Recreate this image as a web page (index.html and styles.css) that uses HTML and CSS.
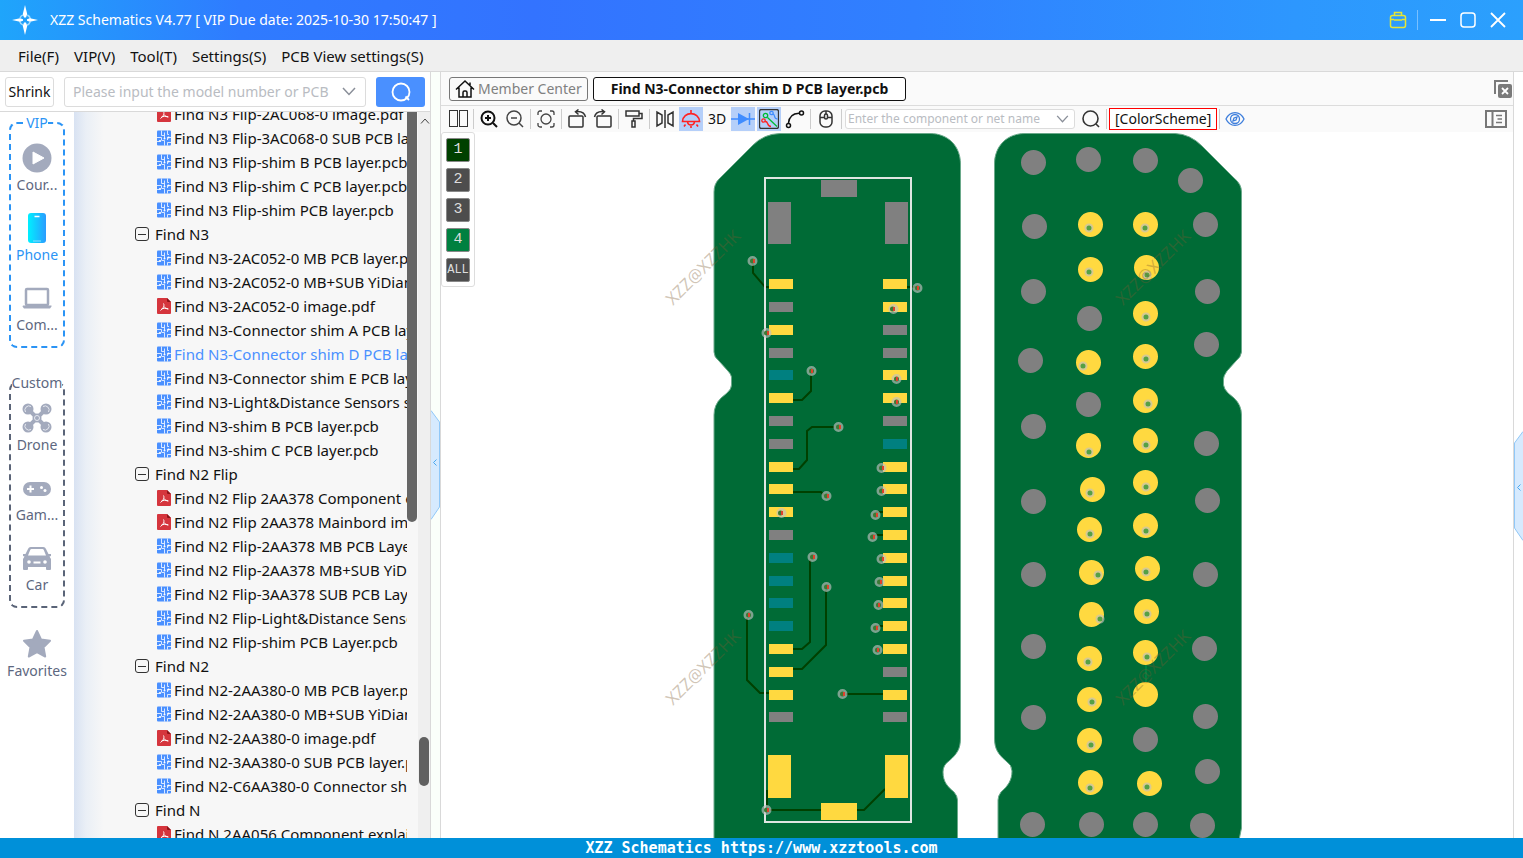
FILE: index.html
```html
<!DOCTYPE html>
<html lang="en">
<head>
<meta charset="utf-8">
<title>XZZ Schematics</title>
<link rel="stylesheet" href="styles.css">
</head>
<body>
<svg class="defs" aria-hidden="true">
  <symbol id="i-pcb" viewBox="0 0 14 16">
    <rect y=".5" width="14" height="15" rx="1" fill="#4a90ff"/>
    <path d="M4.500 .5V5.500H7M7.500 2.500V8.500M10.500 .5V4.500H12M14 7.500H10.500V10M0 7.500H4.500V10M0 11.500H2.500M4.500 10.500H7.500V15.500M10.500 15.500V12.500H14" fill="none" stroke="#fff" stroke-width=".8"/>
    <g fill="#fff"><circle cx="7.500" cy="8.500" r="1"/><circle cx="11.500" cy="7.500" r="1.100"/><circle cx="3" cy="11" r="1.100"/></g>
  </symbol>
  <symbol id="i-pdf" viewBox="0 0 14 16">
    <path d="M1 0H10L14 4V15a1 1 0 0 1-1 1H1a1 1 0 0 1-1-1V1a1 1 0 0 1 1-1z" fill="#d5353d"/>
    <path d="M10 0L14 4H11a1 1 0 0 1-1-1z" fill="#8c1318"/>
    <path d="M6.500 5.500C7.800 8 6 10.500 3.500 12.500M7 8.500C8 10.200 9.500 11 11.500 11M4 11.500C6 10 8.500 10 11 10.800" fill="none" stroke="#fff"/>
  </symbol>
</svg>

<div class="app">
  <header class="titlebar">
    <svg class="logo" width="26" height="30" viewBox="0 0 26 30">
      <circle cx="13" cy="15" r="5.500" fill="none" stroke="#9fdcff" stroke-width="1.500" stroke-dasharray="5 3.640" stroke-dashoffset="-1.800"/>
      <path d="M13 0L15.200 9L14 12.500H12L10.800 9zM13 30L15.200 21L14 17.500H12L10.800 21zM0 15L8 13.300L11 14.200V15.800L8 16.700zM26 15L18 13.300L15 14.200V15.800L18 16.700z" fill="#fff"/>
    </svg>
    <h1 class="title">XZZ Schematics V4.77 [ VIP Due date: 2025-10-30 17:50:47 ]</h1>
    <div class="window-tools">
      <button class="plain" aria-label="Toolbox"><svg width="18" height="18" viewBox="0 0 18 18" fill="none" stroke="#e6e635" stroke-width="1.500"><rect x="1.500" y="4.500" width="15" height="12" rx="2"/><path d="M5.500 4V1.500H12.500V4M2 8.500H5M13 8.500H16M5 9H13"/></svg></button>
      <span class="divider"></span>
      <button class="plain" aria-label="Minimize"><svg width="18" height="18" viewBox="0 0 18 18"><path d="M1 9H17" stroke="#fff" stroke-width="2"/></svg></button>
      <button class="plain" aria-label="Maximize"><svg width="18" height="18" viewBox="0 0 18 18"><rect x="2" y="2" width="14" height="14" rx="3" fill="none" stroke="#fff" stroke-width="1.500"/></svg></button>
      <button class="plain" aria-label="Close"><svg width="18" height="18" viewBox="0 0 18 18"><path d="M2 2L16 16M16 2L2 16" stroke="#fff" stroke-width="1.800"/></svg></button>
    </div>
  </header>

  <nav class="menubar">
    <button class="plain">File(F)</button>
    <button class="plain">VIP(V)</button>
    <button class="plain">Tool(T)</button>
    <button class="plain">Settings(S)</button>
    <button class="plain">PCB View settings(S)</button>
  </nav>

  <div class="body">
    <aside class="sidebar">
      <form class="search">
        <button type="button" class="shrink">Shrink</button>
        <div class="combo">
          <input type="text" aria-label="Model number" placeholder="Please input the model number or PCB">
          <svg width="14" height="9" viewBox="0 0 14 9"><path d="M1 1L7 7.500L13 1" fill="none" stroke="#8a8f99" stroke-width="1.500"/></svg>
        </div>
        <button type="button" class="go" aria-label="Search"><svg width="22" height="22" viewBox="0 0 22 22" fill="none" stroke="#fff" stroke-width="1.800"><circle cx="11" cy="11" r="8.500"/><path d="M15.500 15.500L19 19"/></svg></button>
      </form>
      <div class="browser">
        <nav class="rail">
          <fieldset class="group vip">
            <legend>VIP</legend>
            <a href="#course"><svg width="30" height="30" viewBox="0 0 30 30"><circle cx="15" cy="15" r="14.500" fill="#a3aabd"/><path d="M11 9L22 15L11 21z" fill="#fff" stroke="#fff" stroke-linejoin="round"/></svg>Cour...</a>
            <a href="#phone" class="active"><svg width="30" height="30" viewBox="0 0 30 30"><defs><linearGradient id="ph"><stop stop-color="#00f0ff"/><stop offset="1" stop-color="#2a9cff"/></linearGradient></defs><rect x="6" y="0" width="18" height="30" rx="3" fill="url(#ph)"/><path d="M12.500 3.500H17.500" stroke="#fff" stroke-width="1.500"/><path d="M11 28H19" stroke="#8fe0ff"/></svg>Phone</a>
            <a href="#computer"><svg width="30" height="30" viewBox="0 0 30 30"><rect x="4" y="6" width="22" height="16" rx="1" fill="none" stroke="#a3aabd" stroke-width="2.500"/><path d="M1 22.500H29.500V23.500L28 25.500H2L.5 23.500z" fill="#a3aabd"/></svg>Com...</a>
          </fieldset>
          <fieldset class="group custom">
            <legend>Custom</legend>
            <a href="#drone"><svg width="30" height="30" viewBox="0 0 30 30"><path d="M6 6L15 15L24 6M6 24L15 15L24 24" fill="none" stroke="#a3aabd" stroke-width="4"/><g fill="#a3aabd"><circle cx="15" cy="15" r="4.500"/><circle cx="6" cy="6" r="5.500"/><circle cx="24" cy="6" r="5.500"/><circle cx="6" cy="24" r="5.500"/><circle cx="24" cy="24" r="5.500"/></g><g fill="none" stroke="#e6e9f0"><circle cx="15" cy="15" r="2.500"/><path d="M3.500 9A4 4 0 0 1 9 3.500M26.500 9A4 4 0 0 0 21 3.500M3.500 21A4 4 0 0 0 9 26.500M26.500 21A4 4 0 0 1 21 26.500"/></g></svg>Drone</a>
            <a href="#game"><svg width="30" height="30" viewBox="0 0 30 30"><rect x="1" y="9" width="28" height="14" rx="7" fill="#a3aabd"/><path d="M8.500 12.500V19.500M5 16H12" stroke="#fff" stroke-width="2"/><circle cx="19.500" cy="14.500" r="1.500" fill="#fff"/><circle cx="23" cy="17.500" r="1.500" fill="#fff"/></svg>Gam...</a>
            <a href="#car"><svg width="30" height="30" viewBox="0 0 30 30"><path d="M9 4H21a3 3 0 0 1 3 2L26.500 11H29V13L27.500 13.500L29 16V26a1 1 0 0 1-1 1H25a1 1 0 0 1-1-1V24H6V26a1 1 0 0 1-1 1H2a1 1 0 0 1-1-1V16L2.500 13.500L1 13V11H3.500L6 6A3 3 0 0 1 9 4z" fill="#a3aabd"/><path d="M9.500 6H20.500a1.500 1.500 0 0 1 1.300 1L24 12.500H6L8.200 7A1.500 1.500 0 0 1 9.500 6z" fill="#fff"/><circle cx="7" cy="19" r="1.800" fill="#fff"/><circle cx="23" cy="19" r="1.800" fill="#fff"/><path d="M11.500 19.500H18.500" stroke="#fff" stroke-width="2"/></svg>Car</a>
          </fieldset>
          <a href="#favorites"><svg width="30" height="30" viewBox="0 0 30 30"><path d="M15 2L19 10.500L28 11.800L21.500 18.300L23.200 27.500L15 23.200L6.800 27.500L8.500 18.300L2 11.800L11 10.500z" fill="#a3aabd" stroke="#a3aabd" stroke-width="2" stroke-linejoin="round"/></svg>Favorites</a>
        </nav>
        <div class="tree">
          <ul class="rows">
            <li><a href="#f"><svg><use href="#i-pdf"/></svg>Find N3 Flip-2AC068-0 image.pdf</a></li>
            <li><a href="#f"><svg><use href="#i-pcb"/></svg>Find N3 Flip-3AC068-0 SUB PCB layer.pcb</a></li>
            <li><a href="#f"><svg><use href="#i-pcb"/></svg>Find N3 Flip-shim B PCB layer.pcb</a></li>
            <li><a href="#f"><svg><use href="#i-pcb"/></svg>Find N3 Flip-shim C PCB layer.pcb</a></li>
            <li><a href="#f"><svg><use href="#i-pcb"/></svg>Find N3 Flip-shim PCB layer.pcb</a></li>
            <li class="folder"><button class="plain"><span class="toggle"></span>Find N3</button></li>
            <li><a href="#f"><svg><use href="#i-pcb"/></svg>Find N3-2AC052-0 MB PCB layer.pcb</a></li>
            <li><a href="#f"><svg><use href="#i-pcb"/></svg>Find N3-2AC052-0 MB+SUB YiDian.pcb</a></li>
            <li><a href="#f"><svg><use href="#i-pdf"/></svg>Find N3-2AC052-0 image.pdf</a></li>
            <li><a href="#f"><svg><use href="#i-pcb"/></svg>Find N3-Connector shim A PCB layer.pcb</a></li>
            <li class="selected"><a href="#f"><svg><use href="#i-pcb"/></svg>Find N3-Connector shim D PCB layer.pcb</a></li>
            <li><a href="#f"><svg><use href="#i-pcb"/></svg>Find N3-Connector shim E PCB layer.pcb</a></li>
            <li><a href="#f"><svg><use href="#i-pcb"/></svg>Find N3-Light&amp;Distance Sensors shim.pcb</a></li>
            <li><a href="#f"><svg><use href="#i-pcb"/></svg>Find N3-shim B PCB layer.pcb</a></li>
            <li><a href="#f"><svg><use href="#i-pcb"/></svg>Find N3-shim C PCB layer.pcb</a></li>
            <li class="folder"><button class="plain"><span class="toggle"></span>Find N2 Flip</button></li>
            <li><a href="#f"><svg><use href="#i-pdf"/></svg>Find N2 Flip 2AA378 Component explain.pdf</a></li>
            <li><a href="#f"><svg><use href="#i-pdf"/></svg>Find N2 Flip 2AA378 Mainbord image.pdf</a></li>
            <li><a href="#f"><svg><use href="#i-pcb"/></svg>Find N2 Flip-2AA378 MB PCB Layer.pcb</a></li>
            <li><a href="#f"><svg><use href="#i-pcb"/></svg>Find N2 Flip-2AA378 MB+SUB YiDian.pcb</a></li>
            <li><a href="#f"><svg><use href="#i-pcb"/></svg>Find N2 Flip-3AA378 SUB PCB Layer.pcb</a></li>
            <li><a href="#f"><svg><use href="#i-pcb"/></svg>Find N2 Flip-Light&amp;Distance Sensor.pcb</a></li>
            <li><a href="#f"><svg><use href="#i-pcb"/></svg>Find N2 Flip-shim PCB Layer.pcb</a></li>
            <li class="folder"><button class="plain"><span class="toggle"></span>Find N2</button></li>
            <li><a href="#f"><svg><use href="#i-pcb"/></svg>Find N2-2AA380-0 MB PCB layer.pcb</a></li>
            <li><a href="#f"><svg><use href="#i-pcb"/></svg>Find N2-2AA380-0 MB+SUB YiDian.pcb</a></li>
            <li><a href="#f"><svg><use href="#i-pdf"/></svg>Find N2-2AA380-0 image.pdf</a></li>
            <li><a href="#f"><svg><use href="#i-pcb"/></svg>Find N2-3AA380-0 SUB PCB layer.pcb</a></li>
            <li><a href="#f"><svg><use href="#i-pcb"/></svg>Find N2-C6AA380-0 Connector shim.pcb</a></li>
            <li class="folder"><button class="plain"><span class="toggle"></span>Find N</button></li>
            <li><a href="#f"><svg><use href="#i-pdf"/></svg>Find N 2AA056 Component explain.pdf</a></li>
          </ul>
          <div class="inner-track"><div class="thumb"></div></div>
          <div class="outer-track">
            <svg width="10" height="6" viewBox="0 0 10 6"><path d="M1 5.500L5 1L9 5.500" fill="none" stroke="#444"/></svg>
            <div class="thumb"></div>
          </div>
        </div>
      </div>
    </aside>

    <div class="splitter">
      <button class="plain" aria-label="Collapse list"><svg width="9" height="110" viewBox="0 0 9 110"><path d="M0 .5L8.500 12V97L0 109.500" fill="#d6eafe" stroke="#90c8f8"/><path d="M5.500 49.500L2.500 52.500L5.500 55.500" fill="none" stroke="#4aa8f0"/></svg></button>
    </div>

    <main class="viewer">
      <div class="tabs">
        <button class="tab home"><svg width="20" height="20" viewBox="0 0 20 20" fill="none" stroke="#111" stroke-width="1.500"><path d="M1 10.500L10 2L19 10.500M4 8.500V18H16V8.500M8 18V13.500a1.500 1.500 0 0 1 1.500-1.500h1a1.500 1.500 0 0 1 1.500 1.500V18M15 3.500V6"/></svg>Member Center</button>
        <button class="tab current">Find N3-Connector shim D PCB layer.pcb</button>
        <button class="plain close-all" aria-label="Close all"><svg width="18" height="18" viewBox="0 0 18 18"><path d="M1 14V1H14" fill="none" stroke="#7a7a7a" stroke-width="2"/><rect x="4" y="4" width="14" height="14" rx="2" fill="#7a7a7a"/><path d="M8 8L14 14M14 8L8 14" stroke="#fff" stroke-width="1.800"/></svg></button>
      </div>
      <div class="toolbar">
        <button class="tool" aria-label="Split view"><svg width="20" height="20" viewBox="0 0 20 20" fill="none" stroke="#333"><rect x="1.500" y="1.500" width="8" height="16"/><rect x="11.500" y="1.500" width="8" height="16"/></svg></button>
        <span class="sep"></span>
        <button class="tool" aria-label="Zoom in"><svg width="20" height="20" viewBox="0 0 20 20" fill="none" stroke="#111" stroke-width="2"><circle cx="9" cy="9" r="6.500"/><path d="M14 14L18 18M6 9H12M9 6V12"/></svg></button>
        <button class="tool" aria-label="Zoom out"><svg width="20" height="20" viewBox="0 0 20 20" fill="none" stroke="#444" stroke-width="1.500"><circle cx="9" cy="9" r="7"/><path d="M14 14L18 18M6 9H12"/></svg></button>
        <span class="sep"></span>
        <button class="tool" aria-label="Fit"><svg width="20" height="20" viewBox="0 0 20 20" fill="none" stroke="#444" stroke-width="1.300"><path d="M2 6V4a2 2 0 0 1 2-2H6M14 2H16a2 2 0 0 1 2 2V6M18 14V16a2 2 0 0 1-2 2H14M6 18H4a2 2 0 0 1-2-2V14"/><circle cx="10" cy="10" r="5"/></svg></button>
        <span class="sep"></span>
        <button class="tool" aria-label="Rotate left"><svg width="20" height="20" viewBox="0 0 20 20" fill="none" stroke="#333" stroke-width="1.500"><rect x="2" y="7" width="14" height="11" rx="1"/><path d="M9 2.500C14 2 17.500 3 18.500 8M11.500 .5L8.500 2.800L11.500 5.500"/></svg></button>
        <button class="tool" aria-label="Rotate right"><svg width="20" height="20" viewBox="0 0 20 20" fill="none" stroke="#333" stroke-width="1.500"><rect x="4" y="7" width="14" height="11" rx="1"/><path d="M11 2.500C6 2 2.500 3 1.500 8M8.500 .5L11.500 2.800L8.500 5.500"/></svg></button>
        <span class="sep"></span>
        <button class="tool" aria-label="Paint"><svg width="20" height="20" viewBox="0 0 20 20" fill="none" stroke="#333" stroke-width="1.500"><rect x="2" y="2" width="13" height="5"/><path d="M15 4.500H18V9.500H9.500V12"/><rect x="8" y="12" width="3" height="6"/></svg></button>
        <span class="sep"></span>
        <button class="tool" aria-label="Mirror"><svg width="20" height="20" viewBox="0 0 20 20" fill="none" stroke="#333" stroke-width="1.500"><path d="M2 3V17L7 14V6zM18 3V17L13 14V6zM10 1V19"/></svg></button>
        <button class="tool on" aria-label="Light"><svg width="20" height="20" viewBox="0 0 20 20" fill="none" stroke="#f22" stroke-width="1.600"><path d="M10 1V4.500M1.500 12.500C2 2 18 2 18.500 12.500zM6.500 13C7 17 13 17 13.500 13M10 17V19M4.500 15.500L3 17.500M15.500 15.500L17 17.500"/></svg></button>
        <button class="tool">3D</button>
        <button class="tool on" aria-label="Diode"><svg width="24" height="20" viewBox="0 0 24 20"><path d="M0 10H24M18.500 4V16" stroke="#3f8cff" stroke-width="1.500"/><path d="M7 4V16L18 10z" fill="#3f8cff"/></svg></button>
        <button class="tool on" aria-label="Nets"><svg width="20" height="20" viewBox="0 0 20 20" fill="none" stroke-width="1.300"><rect x=".5" y=".5" width="19" height="19" rx="2" stroke="#333"/><path d="M8.500 8.500L18 17.500" stroke="#0b3"/><circle cx="6.500" cy="6.500" r="2.200" stroke="#0b3"/><circle cx="12.500" cy="4" r="1.700" stroke="#3f8cff"/><path d="M14 5C17 6 14 10 18.500 10" stroke="#3f8cff"/><circle cx="4.500" cy="11.500" r="1.700" stroke="#f22"/><path d="M6 12.500C10 12 7 17 12 17.500" stroke="#f22"/></svg></button>
        <button class="tool" aria-label="Curve"><svg width="20" height="20" viewBox="0 0 20 20" fill="none" stroke="#111" stroke-width="1.500"><circle cx="3.500" cy="16.500" r="2"/><circle cx="16.500" cy="4" r="2"/><path d="M3.500 14C4 8 8 4.500 14 4.200"/></svg></button>
        <span class="sep"></span>
        <button class="tool" aria-label="Mouse"><svg width="20" height="20" viewBox="0 0 20 20" fill="none" stroke="#333" stroke-width="1.500"><rect x="4" y="2" width="12" height="16" rx="5"/><path d="M4 8.500H16M10 2V5"/><rect x="8.500" y="5" width="3" height="5" rx="1.500" fill="#fafafa"/></svg></button>
        <span class="sep"></span>
        <div class="combo net">
          <input type="text" aria-label="Component or net name" placeholder="Enter the component or net name">
          <svg width="13" height="8" viewBox="0 0 14 9"><path d="M1 1L7 7.500L13 1" fill="none" stroke="#8a8f99" stroke-width="1.500"/></svg>
        </div>
        <button class="tool" aria-label="Find"><svg width="20" height="20" viewBox="0 0 20 20" fill="none" stroke="#333" stroke-width="1.600"><circle cx="9.500" cy="9.500" r="7.500"/><path d="M15 15L18 18"/></svg></button>
        <span class="sep"></span>
        <button class="scheme">[ColorScheme]</button>
        <span class="sep"></span>
        <button class="tool" aria-label="Show"><svg width="20" height="20" viewBox="0 0 20 20" fill="none" stroke="#3f7fdc" stroke-width="1.300"><path d="M1 10C5 1.500 15 1.500 19 10C15 18.500 5 18.500 1 10z"/><circle cx="10" cy="10" r="4.500"/><path d="M8 12L9 9L12 8L11 11z"/></svg></button>
        <button class="tool panel" aria-label="Side panel"><svg width="22" height="20" viewBox="0 0 22 20" fill="none" stroke="#777" stroke-width="2"><rect x="1" y="2" width="20" height="16"/><path d="M7.500 2V18"/><path d="M11 6.500H17M12.500 10H17M11 13.500H17" stroke-width="1.500"/></svg></button>
      </div>
      <div class="canvas">
        <svg class="board" viewBox="441 132 1072 706" preserveAspectRatio="xMidYMin slice">
          <g fill="#006b36" stroke="#6aa98a">
            <path d="M780 133.500H930C948 133.500 960.500 146 960.500 164V738C960.500 749 957 754 949 761Q943 765 943 772C943 782 948 787 954 792Q957.500 796 957.500 800V845H714V415Q714 405 721 398L727 393Q731.500 389 731.500 385V377Q731 374 728 371L719 361Q714 357 714 352V192Q714 184 719 179L753 145Q764 134 780 133.500z"/>
            <path d="M1025 133.500H1175Q1190 134 1202 146L1234 178Q1241.500 184 1241.500 192V352Q1241 357 1236 361L1227 371Q1223.500 376 1223.500 379V385Q1224 389 1228 393L1234 398Q1241.500 405 1241.500 415V828L1238 845H998V800Q998 796 1001 792C1008 786 1012 780 1012 771Q1012 765 1006 761C998 754 994.500 749 994.500 738V164C994.500 146 1007 133.500 1025 133.500z"/>
          </g>
          <g fill="none" stroke="#004000" stroke-width="2">
            <path d="M753 264V273L765 287H769M907 287H917M793 400H802L811 391V375M793 469H799L807 460V431L812 427H834M793 492H821L825 496M810 560V642L802 649H793M826 590V645L802 669H793M747 618V680L760 693H769M846 694H883M770 810H821M857 810H864L885 789M767 806V791H769M876 512H884M872 535H884M876 626H884"/>
          </g>
          <path d="M1146 664V682" stroke="#008040" stroke-width="2"/>
          <path fill="#808080" d="M821 180h36v17h-36zM768 202h23v42h-23zM885 202h23v42h-23zM769 302h24v10h-24zM769 348h24v10h-24zM769 416h24v10h-24zM769 439h24v10h-24zM769 530h24v10h-24zM769 712h24v10h-24zM883 325h24v10h-24zM883 348h24v10h-24zM883 416h24v10h-24zM883 667h24v10h-24zM883 712h24v10h-24z"/>
          <path fill="#008080" d="M769 370h24v10h-24zM769 553h24v10h-24zM769 576h24v10h-24zM769 598h24v10h-24zM769 621h24v10h-24zM883 439h24v10h-24z"/>
          <path fill="#ffd940" d="M768 755h23v43h-23zM885 755h23v43h-23zM821 803h36v17h-36zM769 279h24v10h-24zM769 325h24v10h-24zM769 393h24v10h-24zM769 462h24v10h-24zM769 484h24v10h-24zM769 507h24v10h-24zM769 644h24v10h-24zM769 667h24v10h-24zM769 690h24v10h-24zM883 279h24v10h-24zM883 302h24v10h-24zM883 370h24v10h-24zM883 393h24v10h-24zM883 462h24v10h-24zM883 484h24v10h-24zM883 507h24v10h-24zM883 530h24v10h-24zM883 553h24v10h-24zM883 576h24v10h-24zM883 598h24v10h-24zM883 621h24v10h-24zM883 644h24v10h-24zM883 690h24v10h-24z"/>
          <rect x="765" y="178" width="146" height="644" fill="none" stroke="#dfe6e2" stroke-width="2"/>
          <g fill="none" stroke-linecap="round">
            <g transform="translate(.5 .5)" stroke-width="25">
              <path stroke="#808080" d="M1033 162h0M1088 159h0M1145 160h0M1190 180h0M1034 226h0M1205 224h0M1033 291h0M1207 291h0M1089 318h0M1030 360h0M1206 344h0M1088 404h0M1033 426h0M1206 443h0M1033 501h0M1207 500h0M1033 574h0M1205 574h0M1033 646h0M1204 648h0M1033 717h0M1205 716h0M1145 739h0M1207 771h0M1032 824h0M1091 824h0M1145 824h0M1202 825h0"/>
              <path stroke="#ffd940" d="M1090 224h0M1145 224h0M1090 269h0M1146 267h0M1145 313h0M1088 362h0M1145 356h0M1145 400h0M1088 445h0M1145 440h0M1092 489h0M1145 482h0M1089 529h0M1145 525h0M1091 572h0M1147 568h0M1091 614h0M1146 611h0M1089 658h0M1145 652h0M1089 699h0M1145 694h0M1089 740h0M1090 782h0M1149 783h0"/>
            </g>
            <path stroke="#c0c0c0" stroke-opacity=".65" stroke-width="9" d="M1089 228h0M1145 228h0M1089 272h0M1147 275h0M1146 317h0M1083 366h0M1146 359h0M1148 404h0M1089 452h0M1146 445h0M1090 493h0M1146 487h0M1090 534h0M1146 531h0M1098 575h0M1146 572h0M1100 619h0M1147 614h0M1088 662h0M1147 657h0M1092 702h0M1091 745h0M1090 788h0M1147 787h0"/>
            <path stroke="#55a045" stroke-width="5" d="M1089 228h0M1145 228h0M1089 272h0M1147 275h0M1146 317h0M1083 366h0M1146 359h0M1148 404h0M1089 452h0M1146 445h0M1090 493h0M1146 487h0M1090 534h0M1146 531h0M1098 575h0M1146 572h0M1100 619h0M1147 614h0M1088 662h0M1147 657h0M1092 702h0M1091 745h0M1090 788h0M1147 787h0"/>
            <g transform="translate(.5 0)">
              <path stroke="#c0c0c0" stroke-opacity=".65" stroke-width="10" d="M752 261h0M917 288h0M893 309h0M766 333h0M811 371h0M896 379h0M896 402h0M838 427h0M881 468h0M881 491h0M826 496h0M875 515h0M781 513h0M872 537h0M881 559h0M812 557h0M879 582h0M826 587h0M878 605h0M748 615h0M875 628h0M877 650h0M842 694h0M766 810h0"/>
              <path stroke="#3c7a35" stroke-width="5" d="M752 261h0M917 288h0M892 309h0M766 333h0M811 371h0M896 379h0M896 402h0M838 427h0M881 468h0M881 491h0M826 496h0M875 515h0M780 513h0M872 537h0M881 559h0M812 557h0M879 582h0M826 587h0M878 605h0M748 615h0M875 628h0M877 650h0M842 694h0M766 810h0"/>
              <path stroke="#e0402c" stroke-width="2" stroke-linecap="butt" d="M753.500 259v4M917.500 286v4M893.500 307v4M767.500 331v4M811.500 369v4M896.500 377v4M896.500 400v4M839.500 425v4M882.500 466v4M882.500 489v4M827.500 494v4M876.500 513v4M781.500 511v4M873.500 535v4M882.500 557v4M813.500 555v4M880.500 580v4M827.500 585v4M878.500 603v4M748.500 613v4M876.500 626v4M877.500 648v4M843.500 692v4M767.500 808v4"/>
            </g>
          </g>
          <g class="watermark">
            <text transform="translate(673 306) rotate(-45)">XZZ@XZZHK</text>
            <text transform="translate(673 706) rotate(-45)">XZZ@XZZHK</text>
            <text transform="translate(1123 306) rotate(-45)">XZZ@XZZHK</text>
            <text transform="translate(1123 706) rotate(-45)">XZZ@XZZHK</text>
          </g>
        </svg>
        <div class="layers">
          <button class="l1">1</button>
          <button>2</button>
          <button>3</button>
          <button class="l4">4</button>
          <button class="all">ALL</button>
        </div>
      </div>
    </main>

    <div class="splitter right">
      <button class="plain" aria-label="Open panel"><svg width="9" height="110" viewBox="0 0 9 110"><path d="M9 .5L.5 12V97L9 109.500" fill="#d6eafe" stroke="#90c8f8"/><path d="M6.500 53.500L3.500 56.500L6.500 59.500" fill="none" stroke="#4aa8f0"/></svg></button>
    </div>
  </div>

  <footer class="status">XZZ Schematics https://www.xzztools.com</footer>
</div>
</body>
</html>
```
FILE: styles.css
```css
* { box-sizing: border-box; }
body {
  margin: 0;
  font: 15px/24px "Noto Sans", "Open Sans", sans-serif;
  color: #111;
  background: #fff;
}
button, input { font: inherit; color: inherit; padding: 0; margin: 0; }
button { cursor: pointer; }
a { color: inherit; text-decoration: none; }
svg { display: block; flex: none; }
.defs { position: absolute; width: 0; height: 0; }
.plain { border: 0; background: none; }
.app { display: flex; flex-direction: column; height: 100vh; overflow: hidden; }

.titlebar {
  display: flex;
  align-items: center;
  flex: 0 0 40px;
  padding: 0 16px 0 12px;
  color: #fff;
  background: linear-gradient(90deg, #1fa5fb 0, #2f7bff 240px, #3373ff 35%, #3080ff 60%, #2d97fe 85%, #2ba0fd 100%);
}
.title { margin: 0 0 0 12px; font-size: 14px; font-weight: 400; white-space: nowrap; }
.window-tools { display: flex; align-items: center; gap: 12px; margin-left: auto; }
.divider { width: 1px; height: 20px; margin: 0 -1px 0 -2px; background: #79c0ff; }

.menubar {
  display: flex;
  align-items: center;
  gap: 15px;
  flex: 0 0 32px;
  padding: 0 18px;
  background: #efefef;
  border-bottom: 1px solid #d9d9d9;
}

.body { display: flex; flex: 1; min-height: 0; }
.sidebar { display: flex; flex-direction: column; flex: 0 0 431px; min-width: 0; border-right: 1px solid #d9d9d9; }
.search {
  display: flex;
  gap: 10px;
  align-items: center;
  flex: 0 0 40px;
  padding: 0 5px;
  border-bottom: 1px solid #d9d9d9;
  font-size: 14px;
}
.shrink {
  flex: 0 0 49px;
  height: 30px;
  background: #fff;
  border: 1px solid #dcdcdc;
  border-radius: 3px;
}
.combo {
  display: flex;
  align-items: center;
  flex: 1;
  min-width: 0;
  height: 30px;
  padding: 0 9px 0 8px;
  background: #fff;
  border: 1px solid #dcdcdc;
  border-radius: 3px;
}
.combo input { flex: 1; min-width: 0; border: 0; outline: 0; background: none; }
.combo input::placeholder { color: #b9bcc2; opacity: 1; }
.go {
  display: grid;
  place-items: center;
  flex: 0 0 49px;
  height: 30px;
  background: #4a90ff;
  border: 0;
  border-radius: 3px;
}

.browser { display: flex; flex: 1; min-height: 0; }
.rail {
  display: flex;
  flex-direction: column;
  align-items: center;
  flex: 0 0 74px;
  font-size: 14px;
  color: #5d6780;
  overflow: hidden;
}
.rail a { display: flex; flex-direction: column; align-items: center; height: 70px; }
.group {
  display: flex;
  flex-direction: column;
  align-items: center;
  width: 56px;
  margin: 0 0 24px;
  padding: 9px 0 0;
  border: 2px dashed #5a6478;
  border-radius: 8px;
  min-width: 0;
}
.group legend { padding: 0; margin: 0 auto; line-height: 22px; white-space: nowrap; }
.rail .group a:last-child { height: 63px; }
.custom { margin-bottom: 21px; }
.vip { border-color: #2b94f5; }
.vip legend, .rail .active { color: #2b94f5; }

.tree {
  display: flex;
  flex: 1;
  min-width: 0;
  overflow: hidden;
  background: linear-gradient(90deg, #d8e2f2 0, #eaeff6 12px, #f7f7f7 30px);
}
.rows { flex: 1; min-width: 0; margin: -10px 0 0; padding: 0 0 0 83px; list-style: none; }
.rows li { height: 24px; overflow: hidden; white-space: nowrap; }
.rows a { display: flex; align-items: center; gap: 3px; }
.rows a svg { width: 14px; height: 16px; }
.rows .folder { margin-left: -22px; }
.folder button { display: flex; align-items: center; gap: 6px; }
.toggle {
  display: grid;
  place-items: center;
  width: 14px;
  height: 14px;
  border: 1px solid #333;
  border-radius: 3px;
}
.toggle::before { content: ""; width: 8px; height: 1px; background: #333; }
.selected { color: #4a90ff; }
.inner-track { flex: 0 0 11px; }
.inner-track .thumb { width: 10px; height: 410px; background: #666; border-radius: 0 0 5px 5px; }
.outer-track { flex: 0 0 12px; background: #efefef; }
.outer-track svg { margin: 6px auto 0 2px; }
.outer-track .thumb { width: 10px; height: 49px; margin: 613px auto 0; background: #606060; border-radius: 5px; }

.splitter {
  display: flex;
  align-items: center;
  flex: 0 0 10px;
  background: #fafffa;
  border-right: 1px solid #d9d9d9;
  padding-top: 20px;
}
.splitter.right { border: 0; border-left: 1px solid #d9d9d9; padding-top: 62px; background: #fff; }

.viewer { display: flex; flex-direction: column; flex: 1; min-width: 0; font-size: 14px; }
.tabs {
  display: flex;
  align-items: center;
  gap: 5px;
  flex: 0 0 34px;
  padding: 0 1px 0 8px;
  background: #fafafa;
  border-bottom: 1px solid #dcdcdc;
}
.tab { display: flex; align-items: center; height: 24px; border-radius: 3px; background: #fff; border: 1px solid #777; white-space: nowrap; }
.home { gap: 3px; padding: 0 5px; color: #808080; background: #fafafa; }
.current { padding: 0 17px; font-weight: 700; border-color: #111; }
.close-all { margin-left: auto; }
.toolbar { display: flex; align-items: center; flex: 0 0 26px; padding: 0 4px; background: #fafafa; }
.tool { display: grid; place-items: center; flex: 0 0 26px; height: 24px; border: 0; background: none; }
.tool.on { background: #b5cff9; background-clip: content-box; padding: 0 1px; }
.sep { width: 1px; height: 20px; margin: 0 2px; background: #ccc; }
.net { flex: 0 0 230px; height: 20px; padding: 0 5px 0 2px; font-size: 12px; margin: 0 3px 0 1px; }
.scheme { height: 22px; padding: 0 5px; border: 1px solid #f00; background: #fff; line-height: 20px; }
.panel { margin-left: auto; }

.canvas { position: relative; flex: 1; min-height: 0; overflow: hidden; background: #fff; }
.board { width: 100%; height: 100%; }
.watermark { font-size: 17px; fill: #7a5a30; fill-opacity: .35; }
.layers {
  position: absolute;
  top: 0;
  left: 0;
  display: flex;
  flex-direction: column;
  gap: 6px;
  padding: 5px 4px 4px;
  background: #fff;
  border: 1px solid #ddd;
  border-radius: 3px;
}
.layers button {
  width: 24px;
  height: 24px;
  padding: 0;
  font: 15px/22px "Liberation Mono", monospace;
  color: #ddd;
  background: #4d4d4d;
  border: 1px solid #888;
  border-radius: 2px;
}
.layers .all { font-size: 12px; }
.layers .l1 { background: #004000; }
.layers .l4 { background: #008040; }

.status {
  flex: 0 0 20px;
  font: 700 15px/20px "DejaVu Sans Mono", monospace;
  color: #fff;
  text-align: center;
  background: #0090d9;
}
```
